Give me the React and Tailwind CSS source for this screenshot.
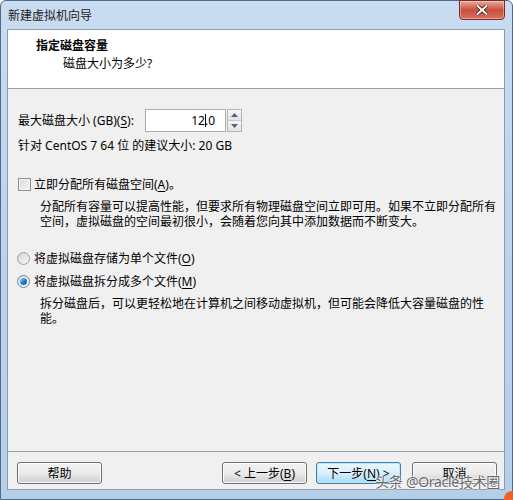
import React from "react";

const Btn = ({ children, primary }) => (
  <div
    className={`flex h-[22px] w-[85px] items-center justify-center rounded-[3px] border ${
      primary
        ? "border-[#3c7fb1] bg-gradient-to-b from-[#eaf6fd] via-[#d9f0fc] to-[#a7d9f5] shadow-[inset_0_0_0_1px_#c4e5f6]"
        : "border-[#707070] bg-gradient-to-b from-[#f2f2f2] via-[#ebebeb] to-[#cfcfcf] shadow-[inset_0_0_0_1px_#fcfcfc]"
    }`}
  >
    {children}
  </div>
);

const U = ({ children }) => <span className="underline underline-offset-2">{children}</span>;

export default function App() {
  return (
    <div className="h-[500px] w-[513px] overflow-hidden bg-white font-['Noto_Sans','Noto_Sans_CJK_SC',sans-serif] text-[12px] leading-[15px] text-black">
      <div className="relative flex h-full flex-col rounded-t-[6px] border border-[#4f6a8a] bg-gradient-to-b from-[#c9dcf1] via-[#bcd3ec] to-[#b6cfe9]">
        {/* title bar */}
        <div className="flex h-[28px] items-center pl-[7px] text-[#1a1a1a]">新建虚拟机向导</div>

        {/* close button */}
        <div className="absolute right-[7px] top-[-1px] flex h-[20px] w-[46px] items-center justify-center rounded-b-[4px] border border-[#7a2a22] bg-gradient-to-b from-[#e9a99a] via-[#c7503d] to-[#d8715e] shadow-[inset_0_0_0_1px_rgba(255,255,255,0.35)]">
          <svg width="12" height="10" viewBox="0 0 12 10">
            <path d="M1.5 1 L10.5 9 M10.5 1 L1.5 9" stroke="#3a1410" strokeWidth="3.4" strokeLinecap="square" />
            <path d="M1.5 1 L10.5 9 M10.5 1 L1.5 9" stroke="#ffffff" strokeWidth="2" strokeLinecap="square" />
          </svg>
        </div>

        {/* client */}
        <div className="ml-[6px] mr-[7px] mb-[9px] flex flex-1 flex-col border border-[#8a9cb3] bg-[#f0f0f0]">
          {/* header */}
          <div className="h-[59px] border-b border-[#a0a0a0] bg-white pl-[28px] pt-[8px]">
            <div className="font-bold">指定磁盘容量</div>
            <div className="mt-[3px] pl-[27px]">磁盘大小为多少?</div>
          </div>

          {/* body */}
          <div className="flex-1 pl-[10px] pt-[20px]">
            <div className="flex h-[23px] items-center">
              <span className="w-[127px]">
                最大磁盘大小 (GB)(<U>S</U>):
              </span>
              <div className="flex h-[23px] w-[81px] items-center justify-end border border-[#abadb3] bg-white pr-[10px]">
                12
                <span className="relative">
                  .
                  <span className="absolute left-[0px] top-[1px] h-[13px] w-px bg-black" />
                </span>
                0
              </div>
              <div className="ml-px flex h-[23px] w-[15px] flex-col border border-[#b6b6b6] bg-[#f0f0f0]">
                <div className="flex flex-1 items-center justify-center border-b border-[#c8c8c8] bg-gradient-to-b from-[#f6f6f6] to-[#e2e2e2]">
                  <svg width="7" height="4" viewBox="0 0 7 4">
                    <path d="M0 4 L3.5 0 L7 4 Z" fill="#4d6185" />
                  </svg>
                </div>
                <div className="flex flex-1 items-center justify-center bg-gradient-to-b from-[#f6f6f6] to-[#e2e2e2]">
                  <svg width="7" height="4" viewBox="0 0 7 4">
                    <path d="M0 0 L3.5 4 L7 0 Z" fill="#4d6185" />
                  </svg>
                </div>
              </div>
            </div>

            <div className="mt-[6px]">针对 CentOS 7 64 位 的建议大小: 20 GB</div>

            <div className="mt-[24px] flex items-center gap-[3px]">
              <span className="h-[13px] w-[13px] border border-[#8e8f8f] bg-gradient-to-br from-[#dcdcdc] to-[#f5f5f5] shadow-[inset_0_0_0_1px_#f4f4f4]" />
              <span>
                立即分配所有磁盘空间(<U>A</U>)。
              </span>
            </div>
            <div className="mt-[7px] pl-[22px]">
              分配所有容量可以提高性能，但要求所有物理磁盘空间立即可用。如果不立即分配所有
              <br />
              空间，虚拟磁盘的空间最初很小，会随着您向其中添加数据而不断变大。
            </div>

            <div className="mt-[22px] flex items-center gap-[4px]">
              <span className="ml-[-1px] h-[13px] w-[13px] rounded-full border border-[#a0a0a0] bg-gradient-to-br from-[#d6d6d6] to-[#f8f8f8]" />
              <span>
                将虚拟磁盘存储为单个文件(<U>O</U>)
              </span>
            </div>
            <div className="mt-[8px] flex items-center gap-[4px]">
              <span className="ml-[-1px] flex h-[13px] w-[13px] items-center justify-center rounded-full border border-[#6c8aa8] bg-gradient-to-br from-[#d6dde6] to-[#f8f8f8]">
                <span className="h-[7px] w-[7px] rounded-full bg-gradient-to-br from-[#9fd9f7] via-[#2c80c4] to-[#155a96]" />
              </span>
              <span>
                将虚拟磁盘拆分成多个文件(<U>M</U>)
              </span>
            </div>
            <div className="mt-[7px] pl-[22px]">
              拆分磁盘后，可以更轻松地在计算机之间移动虚拟机，但可能会降低大容量磁盘的性
              <br />
              能。
            </div>
          </div>

          {/* footer */}
          <div className="flex h-[38px] items-start border-t border-[#a0a0a0] pl-[9px] pt-[10px]">
            <Btn>帮助</Btn>
            <div className="ml-[120px]">
              <Btn>
                &lt; 上一步(<U>B</U>)
              </Btn>
            </div>
            <div className="ml-[9px]">
              <Btn primary>
                下一步(<U>N</U>) &gt;
              </Btn>
            </div>
            <div className="ml-[11px]">
              <Btn>取消</Btn>
            </div>
          </div>
        </div>

        {/* watermark */}
        <div className="absolute bottom-[10px] right-[12px] text-[14px] leading-[15px] tracking-[-0.3px] text-[#6b6b6b] [text-shadow:0_0_2px_#fff,0_0_2px_#fff]">
          头条 @Oracle技术圈
        </div>
        <div className="absolute bottom-[-8px] right-[-8px] h-[16px] w-[16px] rounded-full bg-[#f0602a]" />
      </div>
    </div>
  );
}
